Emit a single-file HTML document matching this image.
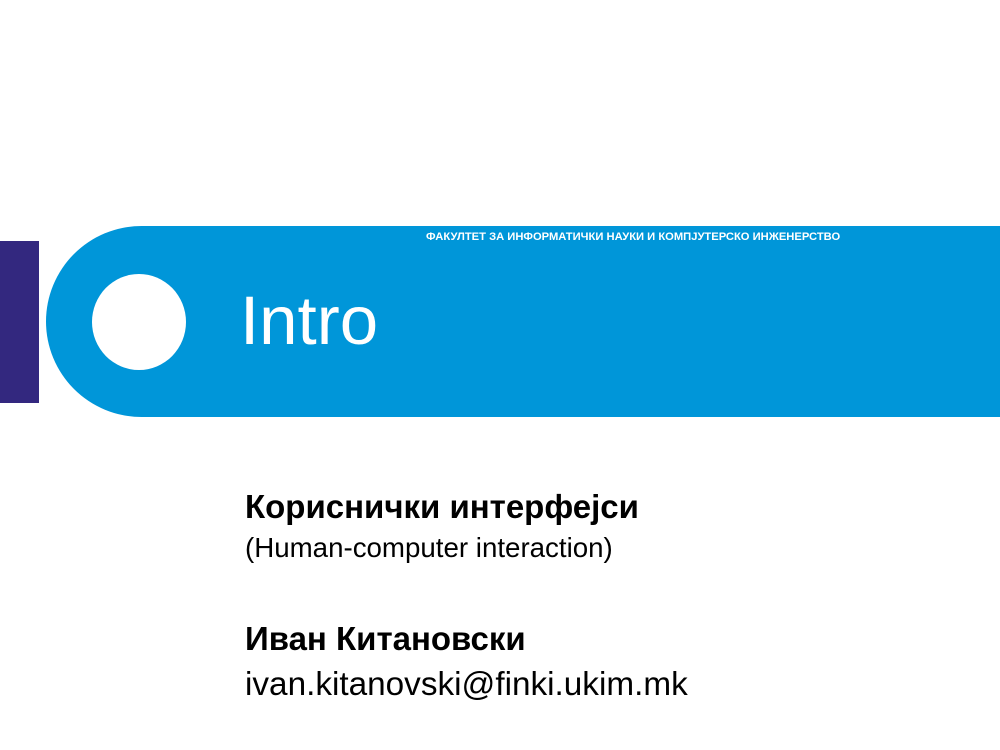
<!DOCTYPE html>
<html><head><meta charset="utf-8"><style>
body{margin:0;width:1000px;height:750px;background:#fff;position:relative;overflow:hidden;font-family:"Liberation Sans",sans-serif}
.p{position:absolute;left:0;top:241px;width:39px;height:162px;background:#33287f}
.b{position:absolute;left:46px;top:226px;width:960px;height:191px;background:#0096d9;border-radius:95.5px 0 0 95.5px}
.c{position:absolute;left:92px;top:274px;width:94px;height:96px;border-radius:50%;background:#fff}
.t{position:absolute;color:#fff;white-space:nowrap;line-height:1}
.k{position:absolute;left:245px;color:#000;white-space:nowrap;line-height:1}
</style></head><body>
<div class="p"></div><div class="b"></div><div class="c"></div>
<div class="t" style="left:426px;top:232px;font-size:11.2px;font-weight:bold">ФАКУЛТЕТ ЗА ИНФОРМАТИЧКИ НАУКИ И КОМПЈУТЕРСКО ИНЖЕНЕРСТВО</div>
<div class="t" style="left:240px;top:286px;font-size:69px">Intro</div>
<div class="k" style="top:490px;font-size:33px;font-weight:bold">Кориснички интерфејси</div>
<div class="k" style="top:534px;font-size:27.7px">(Human-computer interaction)</div>
<div class="k" style="top:622px;font-size:33px;font-weight:bold">Иван Китановски</div>
<div class="k" style="top:668px;font-size:33.3px">ivan.kitanovski@finki.ukim.mk</div>
</body></html>
